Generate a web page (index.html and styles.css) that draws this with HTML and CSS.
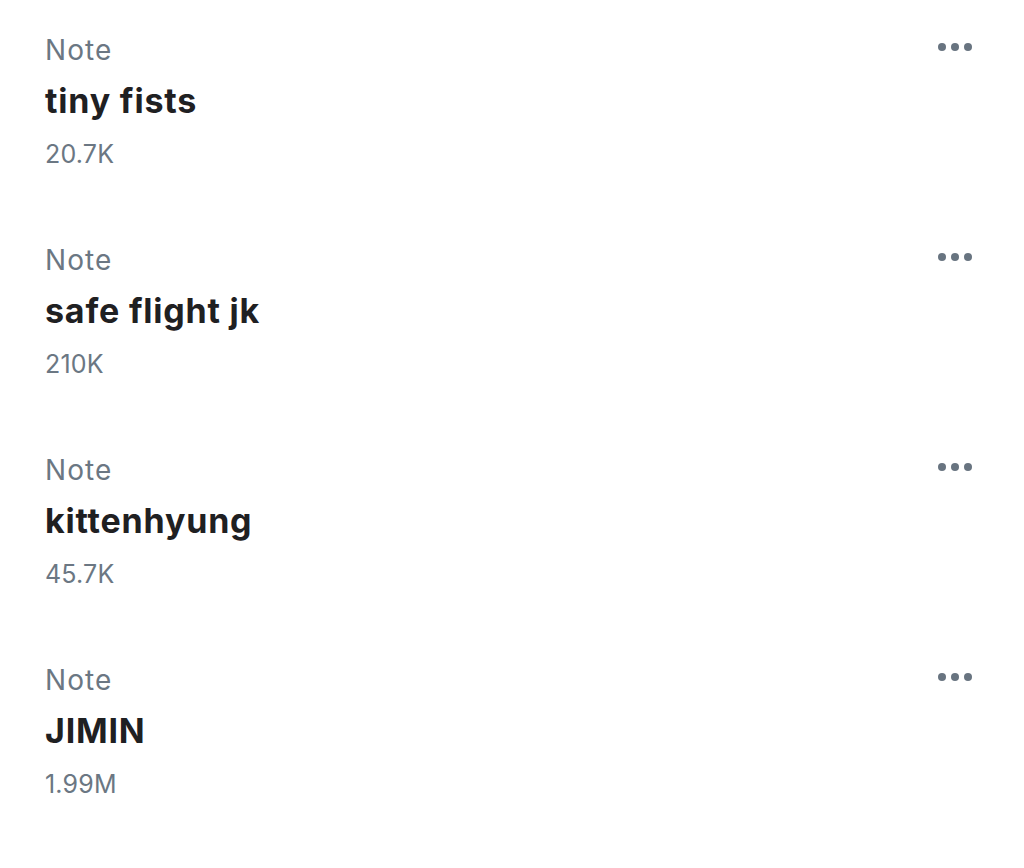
FILE: index.html
```html
<!DOCTYPE html>
<html>
<head>
<meta charset="utf-8">
<link rel="stylesheet" href="styles.css">
</head>
<body>
<div class="list">
  <div class="row">
    <div class="info">
      <div class="kind">Note</div>
      <div class="title">tiny fists</div>
      <div class="count">20.7K</div>
    </div>
    <svg class="more" width="34" height="8" viewBox="0 0 34 8"><circle cx="4" cy="4" r="4"/><circle cx="17" cy="4" r="4"/><circle cx="30" cy="4" r="4"/></svg>
  </div>
  <div class="row">
    <div class="info">
      <div class="kind">Note</div>
      <div class="title">safe flight jk</div>
      <div class="count">210K</div>
    </div>
    <svg class="more" width="34" height="8" viewBox="0 0 34 8"><circle cx="4" cy="4" r="4"/><circle cx="17" cy="4" r="4"/><circle cx="30" cy="4" r="4"/></svg>
  </div>
  <div class="row">
    <div class="info">
      <div class="kind">Note</div>
      <div class="title">kittenhyung</div>
      <div class="count">45.7K</div>
    </div>
    <svg class="more" width="34" height="8" viewBox="0 0 34 8"><circle cx="4" cy="4" r="4"/><circle cx="17" cy="4" r="4"/><circle cx="30" cy="4" r="4"/></svg>
  </div>
  <div class="row">
    <div class="info">
      <div class="kind">Note</div>
      <div class="title">JIMIN</div>
      <div class="count">1.99M</div>
    </div>
    <svg class="more" width="34" height="8" viewBox="0 0 34 8"><circle cx="4" cy="4" r="4"/><circle cx="17" cy="4" r="4"/><circle cx="30" cy="4" r="4"/></svg>
  </div>
</div>
</body>
</html>
```
FILE: styles.css
```css
html, body {
  margin: 0;
  padding: 0;
  background: #ffffff;
}
body {
  font-family: Inter, "Noto Sans", sans-serif;
}
.list {
  padding: 32px 52px 0 45px;
  display: flex;
  flex-direction: column;
}
.row {
  display: flex;
  justify-content: space-between;
  align-items: flex-start;
  height: 210px;
}
.info {
  display: flex;
  flex-direction: column;
}
.kind {
  font-size: 28px;
  line-height: 36px;
  letter-spacing: 1.1px;
  color: #6b7783;
}
.title {
  font-size: 34px;
  line-height: 44px;
  font-weight: 700;
  letter-spacing: 0.8px;
  color: #1f2022;
  margin-top: 11px;
}
.count {
  font-size: 25px;
  line-height: 36px;
  letter-spacing: 0.2px;
  color: #6b7783;
  margin-top: 13px;
}
.more {
  margin-top: 11px;
  fill: #687480;
}
```
